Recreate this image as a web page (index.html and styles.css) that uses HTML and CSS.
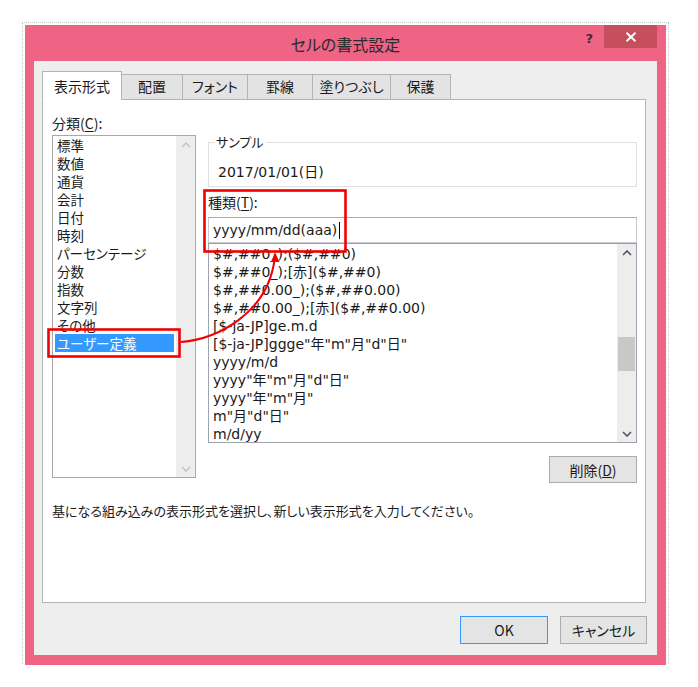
FILE: index.html
```html
<!DOCTYPE html>
<html lang="ja">
<head>
<meta charset="utf-8">
<title>セルの書式設定</title>
<link rel="stylesheet" href="styles.css">
</head>
<body>
<div class="dialog">
  <div class="titlebar">
    <div></div>
    <div class="title">セルの書式設定</div>
    <div class="controls">
      <span class="help">?</span>
      <span class="close"><svg width="12" height="10" viewBox="0 0 12 10"><path d="M1.5 0.8 L10.5 9.2 M10.5 0.8 L1.5 9.2" stroke="#fff" stroke-width="2" fill="none"/></svg></span>
    </div>
  </div>
  <div class="body">
    <div class="tabs">
      <div class="tab active t1">表示形式</div>
      <div class="tab t2">配置</div>
      <div class="tab t3">フォント</div>
      <div class="tab t4">罫線</div>
      <div class="tab t5">塗りつぶし</div>
      <div class="tab t6">保護</div>
    </div>
    <div class="panel">
      <div class="panel-grid">
        <div class="left">
          <div class="label">分類(<u>C</u>):</div>
          <div class="listbox">
            <div class="items jp">
              <div class="item">標準</div>
              <div class="item">数値</div>
              <div class="item">通貨</div>
              <div class="item">会計</div>
              <div class="item">日付</div>
              <div class="item">時刻</div>
              <div class="item">パーセンテージ</div>
              <div class="item">分数</div>
              <div class="item">指数</div>
              <div class="item">文字列</div>
              <div class="item">その他</div>
              <div class="item selected">ユーザー定義</div>
            </div>
            <div class="vscroll disabled">
              <div class="sbtn"><svg width="10" height="6" viewBox="0 0 10 6"><path d="M1 5 L5 1 L9 5" stroke="#c4c4c4" stroke-width="1.6" fill="none"/></svg></div>
              <div class="track"></div>
              <div class="sbtn"><svg width="10" height="6" viewBox="0 0 10 6"><path d="M1 1 L5 5 L9 1" stroke="#c4c4c4" stroke-width="1.6" fill="none"/></svg></div>
            </div>
          </div>
        </div>
        <div class="right">
          <fieldset class="sample">
            <legend>サンプル</legend>
            <div class="sample-text">2017/01/01(日)</div>
          </fieldset>
          <div class="label type-label">種類(<u>T</u>):</div>
          <div class="textbox">yyyy/mm/dd(aaa)<span class="caret"></span></div>
          <div class="formatlist">
            <div class="items fmt">
              <div class="item">$#,##0_);($#,##0)</div>
              <div class="item">$#,##0_);[赤]($#,##0)</div>
              <div class="item">$#,##0.00_);($#,##0.00)</div>
              <div class="item">$#,##0.00_);[赤]($#,##0.00)</div>
              <div class="item">[$-ja-JP]ge.m.d</div>
              <div class="item">[$-ja-JP]ggge"年"m"月"d"日"</div>
              <div class="item">yyyy/m/d</div>
              <div class="item">yyyy"年"m"月"d"日"</div>
              <div class="item">yyyy"年"m"月"</div>
              <div class="item">m"月"d"日"</div>
              <div class="item">m/d/yy</div>
            </div>
            <div class="vscroll">
              <div class="sbtn"><svg width="10" height="6" viewBox="0 0 10 6"><path d="M1 5 L5 1 L9 5" stroke="#555" stroke-width="1.6" fill="none"/></svg></div>
              <div class="track"><div class="thumb"></div></div>
              <div class="sbtn"><svg width="10" height="6" viewBox="0 0 10 6"><path d="M1 1 L5 5 L9 1" stroke="#555" stroke-width="1.6" fill="none"/></svg></div>
            </div>
          </div>
          <div class="row-right"><button class="btn del">削除(<u>D</u>)</button></div>
        </div>
      </div>
      <p class="desc">基になる組み込みの表示形式を選択し、新しい表示形式を入力してください。</p>
      <svg class="annot" width="606" height="506" viewBox="0 0 606 506">
        <rect x="6.5" y="230.5" width="131" height="27" fill="none" stroke="#f00000" stroke-width="2.6"/>
        <rect x="162.5" y="91.5" width="141" height="61" fill="none" stroke="#f00000" stroke-width="2.6"/>
        <path d="M139 243 C175 240 225 215 232.5 161" fill="none" stroke="#f00000" stroke-width="2"/>
        <path d="M233 153 L229 163 L237.5 163 Z" fill="#f00000"/>
      </svg>
    </div>
    <div class="buttons">
      <button class="btn ok">OK</button>
      <button class="btn">キャンセル</button>
    </div>
  </div>
</div>
</body>
</html>
```

FILE: styles.css
```css
html, body {
  margin: 0;
  padding: 0;
  background: #ffffff;
}

body {
  font-family: "Noto Sans CJK JP", sans-serif;
  color: #1a1a1a;
  padding: 25px 0 0 25px;
}

.dialog {
  width: 641px;
  height: 640px;
  box-sizing: border-box;
  background: #ef6385;
  padding: 0 9px 10px 9px;
  display: flex;
  flex-direction: column;
  outline: 1px dotted #c8c8c8;
  outline-offset: 2px;
}

.titlebar {
  height: 36px;
  flex: none;
  display: grid;
  grid-template-columns: 1fr auto 1fr;
}

.title {
  align-self: center;
  font-size: 16px;
  line-height: 20px;
  color: #2a2a2a;
  font-feature-settings: "palt";
  padding-top: 1px;
}

.controls {
  justify-self: end;
  align-self: start;
  display: flex;
  align-items: flex-start;
}

.help {
  font-family: "DejaVu Sans", sans-serif;
  font-weight: bold;
  font-size: 13px;
  line-height: 16px;
  color: #333;
  margin-top: 6px;
  margin-right: 11px;
}

.close {
  width: 53px;
  height: 23px;
  background: #c64f5d;
  display: flex;
  align-items: center;
  justify-content: center;
}

.body {
  flex: 1;
  background: #eeeeee;
  padding: 10px 10px 11px 8px;
  display: flex;
  flex-direction: column;
}

.tabs {
  display: flex;
  align-items: flex-end;
  height: 29px;
  margin-bottom: -1px;
  position: relative;
  z-index: 1;
}

.tab {
  box-sizing: border-box;
  height: 26px;
  border: 1px solid #b4b4b4;
  background: #e3e3e3;
  font-size: 14px;
  line-height: 23px;
  text-align: center;
  margin-left: -1px;
  font-feature-settings: "palt";
}

.tab.active {
  height: 29px;
  background: #ffffff;
  border-bottom-color: #ffffff;
  margin-left: 0;
  line-height: 28px;
}

.t1 { width: 80px; }
.t2 { width: 62px; }
.t3 { width: 66px; }
.t4 { width: 66px; }
.t5 { width: 79px; }
.t6 { width: 61px; }

.panel {
  position: relative;
  box-sizing: border-box;
  width: 604px;
  height: 504px;
  flex: none;
  background: #ffffff;
  border: 1px solid #b4b4b4;
  padding: 14px 8px 0 9px;
}

.panel-grid {
  display: grid;
  grid-template-columns: 144px 429px;
  column-gap: 12px;
  align-items: start;
}

.label {
  font-size: 14px;
  line-height: 18px;
}

.label u {
  text-underline-offset: 2px;
}

.listbox {
  margin-top: 3px;
  height: 343px;
  box-sizing: border-box;
  border: 1px solid #a8a8a8;
  display: flex;
}

.items {
  flex: 1;
  overflow: hidden;
}

.items.jp {
  padding: 0 0 0 2px;
  font-size: 13.5px;
  line-height: 18px;
  font-feature-settings: "palt";
}

.items.jp .item {
  height: 18px;
  padding-left: 2px;
  margin-right: 2px;
}

.item.selected {
  background: #3399ff;
  color: #ffffff;
}

.vscroll {
  width: 19px;
  flex: none;
  background: #ededed;
  display: flex;
  flex-direction: column;
}

.sbtn {
  height: 17px;
  display: flex;
  align-items: center;
  justify-content: center;
  flex: none;
}

.track {
  flex: 1;
}

.thumb {
  margin: 76px 1px 0 1px;
  height: 34px;
  background: #c8c8c8;
}

.right {
  margin-top: 20px;
}

.sample {
  margin: 0;
  border: 1px solid #dedede;
  padding: 0 0 4px 5px;
}

.sample legend {
  padding: 0 2px;
  font-size: 13px;
  line-height: 16px;
  font-feature-settings: "palt";
}

.sample-text {
  margin: 12px 0 0 4px;
  font-family: "DejaVu Sans", "Noto Sans CJK JP", sans-serif;
  font-size: 14px;
  line-height: 20px;
}

.type-label {
  margin-top: 7px;
  line-height: 16px;
}

.textbox {
  margin-top: 7px;
  height: 26px;
  box-sizing: border-box;
  border: 1px solid #c8cad0;
  border-top-color: #a9abb3;
  padding-left: 4px;
  font-family: "DejaVu Sans", "Noto Sans CJK JP", sans-serif;
  font-size: 14px;
  line-height: 23px;
  display: flex;
  align-items: center;
}

.caret {
  width: 1px;
  height: 17px;
  background: #000;
  margin-left: 2px;
}

.formatlist {
  height: 200px;
  box-sizing: border-box;
  border: 1px solid #9ea3ad;
  border-top-color: #a0a0a0;
  display: flex;
}

.items.fmt {
  padding: 1px 0 0 4px;
  font-family: "DejaVu Sans", "Noto Sans CJK JP", sans-serif;
  font-size: 14px;
  line-height: 18px;
  white-space: nowrap;
}

.row-right {
  margin-top: 13px;
  display: flex;
  justify-content: flex-end;
}

.btn {
  font-family: "Noto Sans CJK JP", sans-serif;
  font-size: 14px;
  color: #1a1a1a;
  background: #e4e4e4;
  border: 1px solid #acacac;
  border-radius: 0;
  padding: 0;
  height: 28px;
  width: 88px;
  font-feature-settings: "palt";
}

.btn.del {
  height: 27px;
}

.desc {
  margin: 20px 0 0 0;
  font-size: 13px;
  line-height: 16px;
  font-feature-settings: "palt";
}

.annot {
  position: absolute;
  left: -1px;
  top: -1px;
  pointer-events: none;
}

.buttons {
  margin-top: 13px;
  display: flex;
  justify-content: flex-end;
  gap: 12px;
}

.btn.ok {
  border-color: #3399ff;
}

.buttons .btn:last-child {
  width: 87px;
}
```
